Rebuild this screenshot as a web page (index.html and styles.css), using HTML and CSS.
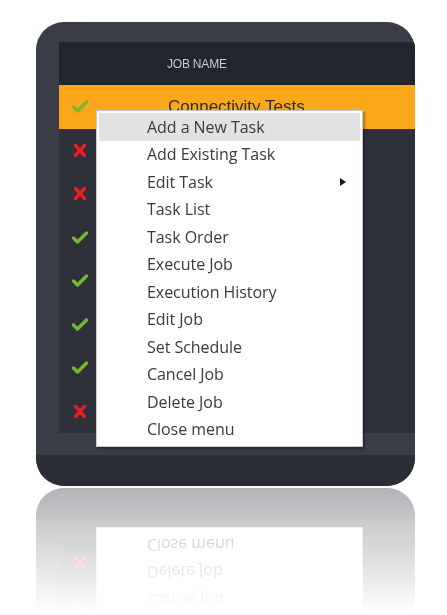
FILE: index.html
```html
<!DOCTYPE html>
<html>
<head>
<meta charset="utf-8">
<link rel="stylesheet" href="styles.css">
</head>
<body>
<div class="card">
  <div class="table">
    <div class="thead"><span class="th">JOB NAME</span></div>
    <div class="row selected"><span class="ico"><svg class="ok" viewBox="0 0 16 13"><path d="M1.5 7 L5.5 11 L14.5 2"/></svg></span><span class="name">Connectivity Tests</span></div>
    <div class="row"><span class="ico"><svg class="bad" viewBox="0 0 16 13"><path d="M3.5 1.5 L12.5 11.5 M12.5 1.5 L3.5 11.5"/></svg></span><span class="name"></span></div>
    <div class="row"><span class="ico"><svg class="bad" viewBox="0 0 16 13"><path d="M3.5 1.5 L12.5 11.5 M12.5 1.5 L3.5 11.5"/></svg></span><span class="name"></span></div>
    <div class="row"><span class="ico"><svg class="ok" viewBox="0 0 16 13"><path d="M1.5 7 L5.5 11 L14.5 2"/></svg></span><span class="name"></span></div>
    <div class="row"><span class="ico"><svg class="ok" viewBox="0 0 16 13"><path d="M1.5 7 L5.5 11 L14.5 2"/></svg></span><span class="name"></span></div>
    <div class="row"><span class="ico"><svg class="ok" viewBox="0 0 16 13"><path d="M1.5 7 L5.5 11 L14.5 2"/></svg></span><span class="name"></span></div>
    <div class="row"><span class="ico"><svg class="ok" viewBox="0 0 16 13"><path d="M1.5 7 L5.5 11 L14.5 2"/></svg></span><span class="name"></span></div>
    <div class="row"><span class="ico"><svg class="bad" viewBox="0 0 16 13"><path d="M3.5 1.5 L12.5 11.5 M12.5 1.5 L3.5 11.5"/></svg></span><span class="name"></span></div>
  </div>
  <div class="spacer"></div>
  <div class="footer"></div>

  <ul class="menu">
    <li class="item hover">Add a New Task</li>
    <li class="item">Add Existing Task</li>
    <li class="item sub">Edit Task<span class="arrow"></span></li>
    <li class="item">Task List</li>
    <li class="item">Task Order</li>
    <li class="item">Execute Job</li>
    <li class="item">Execution History</li>
    <li class="item">Edit Job</li>
    <li class="item">Set Schedule</li>
    <li class="item">Cancel Job</li>
    <li class="item">Delete Job</li>
    <li class="item">Close menu</li>
  </ul>
</div>
</body>
</html>
```

FILE: styles.css
```css
html, body {
  margin: 0;
  padding: 0;
  background: #ffffff;
}

body {
  width: 447px;
  height: 615px;
  overflow: hidden;
}

.card {
  position: relative;
  margin: 22px 0 0 36px;
  width: 379px;
  height: 464px;
  border-radius: 28px;
  overflow: hidden;
  background: #3a3d46;
  padding-top: 20px;
  box-sizing: border-box;
  display: flex;
  flex-direction: column;
  -webkit-box-reflect: below 2px linear-gradient(to bottom, transparent 73%, rgba(0, 0, 0, 0.36));
}

.table {
  margin-left: 23px;
  background: #2e3139;
  display: flex;
  flex-direction: column;
}

.thead {
  height: 43px;
  background: #21262d;
  display: flex;
  align-items: center;
  padding-left: 108px;
}

.th {
  font-family: "Liberation Sans", Arial, sans-serif;
  font-size: 12px;
  color: #c9ccd1;
  letter-spacing: -0.2px;
}

.row {
  height: 43.5px;
  display: flex;
  align-items: center;
}

.row.selected {
  background: #fba71b;
}

.ico {
  width: 42px;
  display: flex;
  justify-content: center;
  align-items: center;
}

.ico svg {
  width: 16px;
  height: 13px;
  fill: none;
  stroke-width: 3.4;
  stroke-linecap: round;
  stroke-linejoin: round;
}

.ok { stroke: #78b82a; }
.bad { stroke: #ea1d25; }

.name {
  padding-left: 67px;
  font-family: "Liberation Sans", Arial, sans-serif;
  font-size: 17px;
  color: #2d2a26;
}

.spacer {
  height: 22px;
  background: #3a3d46;
}

.footer {
  flex: 1;
  background: #2b2e36;
}

.menu {
  position: absolute;
  left: 60px;
  top: 88px;
  width: 267px;
  height: 337px;
  margin: 0;
  padding: 2px;
  box-sizing: border-box;
  list-style: none;
  background: #ffffff;
  border: 1px solid #c9c9c9;
  box-shadow: 2px 2px 2px rgba(0, 0, 0, 0.3);
}

.item {
  position: relative;
  height: 27.5px;
  display: flex;
  align-items: center;
  padding-left: 48px;
  font-family: "Open Sans", "Noto Sans", sans-serif;
  font-size: 16px;
  color: #3a3a3a;
  letter-spacing: -0.05px;
}

.item.hover {
  background: #e2e2e2;
}

.arrow {
  position: absolute;
  left: 241px;
  top: 10px;
  width: 0;
  height: 0;
  border-top: 4px solid transparent;
  border-bottom: 4px solid transparent;
  border-left: 6px solid #1a1a1a;
}
```
